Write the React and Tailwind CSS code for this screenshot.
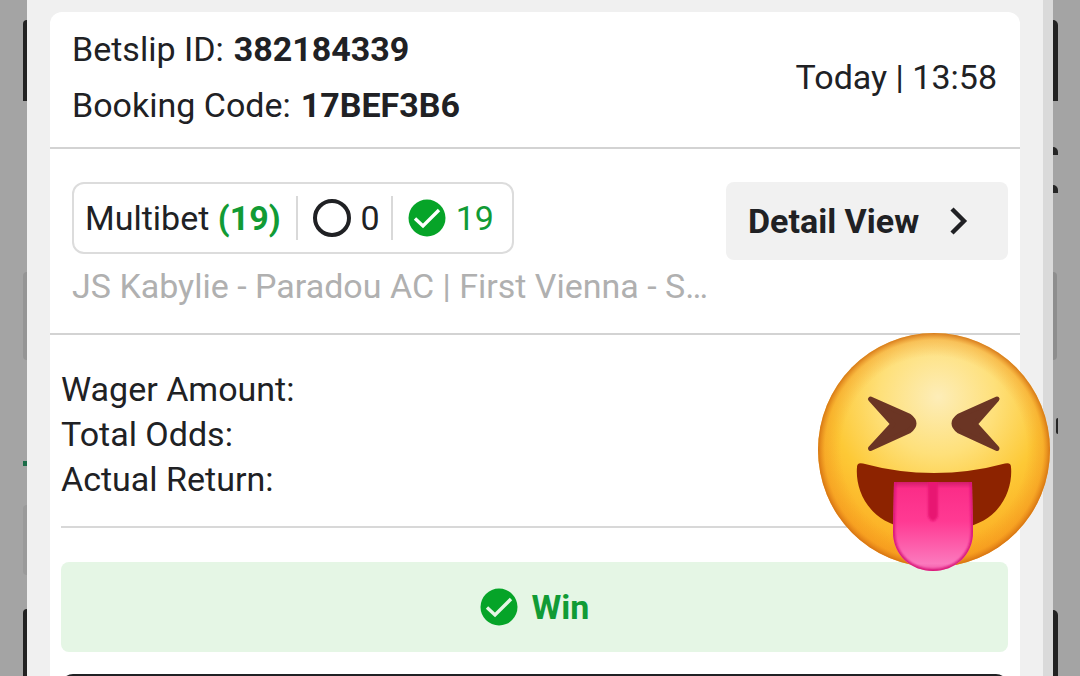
// components/BetslipModal.jsx
const CheckBadge = ({ tickClass }) => (
  <svg viewBox="0 0 38 38" className="size-[38px] shrink-0" aria-hidden="true">
    <circle cx="19" cy="19" r="18.5" className="fill-[#06a428]" />
    <path d="M7 19.500 15 27 31 11" fill="none" strokeWidth="3.4" className={tickClass} />
  </svg>
);

const ChevronRight = () => (
  <svg viewBox="0 0 18 28" className="h-7 w-[18px]" aria-hidden="true">
    <path d="M2 2 14 14 2 26" fill="none" stroke="#202124" strokeWidth="4.4" />
  </svg>
);

const TongueFace = () => (
  <svg viewBox="0 0 232 238" className="h-[238px] w-[232px]" role="img" aria-label="Squinting face with tongue">
    <defs>
      <radialGradient id="skin" gradientUnits="userSpaceOnUse" cx="120" cy="64" r="165">
        <stop offset="0" stopColor="#fdedb8" />
        <stop offset="0.35" stopColor="#fee07a" />
        <stop offset="0.65" stopColor="#fdc936" />
        <stop offset="1" stopColor="#fba61f" />
      </radialGradient>
      <radialGradient id="rim" cx="0.5" cy="0.5" r="0.5">
        <stop offset="0.8" stopColor="#ee8a1c" stopOpacity="0" />
        <stop offset="0.94" stopColor="#ee8a1c" stopOpacity="0.35" />
        <stop offset="1" stopColor="#cf690f" stopOpacity="0.85" />
      </radialGradient>
      <linearGradient id="tongue" x1="0" y1="0" x2="0" y2="1">
        <stop offset="0" stopColor="#c0145c" />
        <stop offset="0.1" stopColor="#fb2d88" />
        <stop offset="0.45" stopColor="#ff3a93" />
        <stop offset="0.9" stopColor="#fb79bd" />
        <stop offset="1" stopColor="#ee4ba0" />
      </linearGradient>
      <clipPath id="tongueClip">
        <path d="M76 149H154L155 199C155 222 137 238 115 238S75 222 75 199Z" />
      </clipPath>
      <filter id="soft" x="-20%" y="-20%" width="140%" height="140%">
        <feGaussianBlur stdDeviation="1.2" />
      </filter>
    </defs>
    <ellipse cx="116" cy="117" rx="116" ry="117" fill="url(#skin)" />
    <ellipse cx="116" cy="117" rx="116" ry="117" fill="url(#rim)" />
    <g fill="#6b3524" stroke="#6b3524" strokeWidth="5" strokeLinejoin="round">
      <path d="M52.500 66 91 83Q101 90.500 91 98L52.500 115.500 75 91Z" />
      <path d="M179 66 141 83Q131 90.500 141 98L179 115.500 157 91Z" />
    </g>
    <path
      d="M39 134Q39 129 45 130.500Q80 140 116 140T187 130.500Q193 129 193 134C195 155 184 188 144 195H88C50 188 37 157 39 134Z"
      fill="#8d2300"
    />
    <g clipPath="url(#tongueClip)">
      <path d="M70 146H160V240H70Z" fill="url(#tongue)" />
      <path d="M110 140H120V183Q118 188 115 188T110 183Z" fill="#e81672" filter="url(#soft)" />
      <path
        d="M76 140H154L155 199C155 222 137 238 115 238S75 222 75 199Z"
        fill="none"
        stroke="#d81378"
        strokeWidth="4"
        filter="url(#soft)"
      />
    </g>
  </svg>
);

// Edges of the page that stay visible behind the modal
const LeftEdge = () => (
  <div className="flex w-[27px] shrink-0 flex-col items-end pt-5">
    <div className="h-[81px] w-1 shrink-0 rounded-tl-full bg-[#222222]" />
    <div className="mt-[171px] h-[88px] w-1 shrink-0 rounded-l-full bg-[#959595]" />
    <div className="mt-[101px] h-[5px] w-1 shrink-0 bg-[#1b6b47]" />
    <div className="mt-[39px] h-[70px] w-1 shrink-0 rounded-l-full bg-[#9a9a9a]" />
    <div className="mt-[34px] w-1 grow rounded-tl-full bg-[#222222]" />
  </div>
);

const RightEdge = () => (
  <div className="flex w-[27px] shrink-0 flex-col items-start pt-5">
    <div className="h-[81px] w-[5px] shrink-0 rounded-tr-full bg-[#222222]" />
    <div className="mt-[46px] h-2 w-[5px] shrink-0 rounded-tr-full bg-[#252525]" />
    <div className="mt-[30px] h-2 w-[5px] shrink-0 rounded-tr-full bg-[#252525]" />
    <div className="mt-[79px] h-[88px] w-1 shrink-0 rounded-r-full bg-[#8e8e8e]" />
    <div className="mt-[58px] ml-[3px] h-4 w-0.5 shrink-0 rounded-l-full bg-[#252525]" />
    <div className="mt-[176px] w-[5px] grow rounded-tr-full bg-[#222222]" />
  </div>
);

const summary = ['Wager Amount:', 'Total Odds:', 'Actual Return:'];

const BetslipHeader = () => (
  <header className="flex items-center justify-between border-b-2 border-[#d3d3d3] pt-[9px] pr-[23px] pb-[14px] pl-[22px]">
    <dl className="leading-[56px]">
      <div className="flex gap-[10px]">
        <dt>Betslip ID:</dt>
        <dd className="font-bold">382184339</dd>
      </div>
      <div className="flex gap-[10px]">
        <dt>Booking Code:</dt>
        <dd className="font-bold">17BEF3B6</dd>
      </div>
    </dl>
    <p>Today | 13:58</p>
  </header>
);

const BetslipMatches = () => (
  <section className="flex items-start justify-between border-b-2 border-[#d3d3d3] pt-[33px] pr-3 pb-[26px] pl-[22px]">
    <div>
      <div className="flex h-[72px] w-fit items-center rounded-xl border-2 border-[#dcdcdc] pr-[18px] pl-[11px]">
        <span>
          Multibet <b className="text-[#119b35]">(19)</b>
        </span>
        <span className="ml-[15px] flex h-11 items-center gap-[10px] border-l-2 border-[#d9d9d9] pl-[15px]">
          <span className="size-[38px] rounded-full border-4 border-[#202124]" />
          0
        </span>
        <span className="ml-[11px] flex h-11 items-center gap-[10px] border-l-2 border-[#d9d9d9] pl-[15px] text-[#119b35]">
          <CheckBadge tickClass="stroke-white" />
          19
        </span>
      </div>
      <p className="pt-3 leading-[41px] text-[#b0b0b0]">JS Kabylie - Paradou AC | First Vienna - S…</p>
    </div>
    <button
      type="button"
      className="flex h-[78px] w-[282px] shrink-0 items-center gap-[31px] rounded-lg bg-[#f1f1f1] pl-[22px] font-bold"
    >
      Detail View
      <ChevronRight />
    </button>
  </section>
);

const BetslipResult = () => (
  <section className="relative pt-8 pr-3 pl-[11px]">
    <ul className="border-b-2 border-[#d8d8d8] pb-6 leading-[45px]">
      {summary.map((label) => (
        <li key={label}>{label}</li>
      ))}
    </ul>
    <div className="mt-[34px] flex h-[90px] items-center justify-center gap-[14px] rounded-lg bg-[#e5f6e5] font-bold text-[#119b35]">
      <CheckBadge tickClass="stroke-[#e5f6e5]" />
      Win
    </div>
    <button type="button" aria-label="Share" className="mt-[22px] h-20 w-full rounded-xl bg-[#202124]" />
    <div className="absolute -top-0.5 -right-[30px]">
      <TongueFace />
    </div>
  </section>
);

const App = () => (
  <div className="flex h-screen overflow-hidden bg-[#a4a4a4] font-[Roboto,sans-serif] text-[34px] leading-[44px] text-[#202124]">
    <LeftEdge />
    <main className="min-w-0 grow border-r-10 border-[#dadada] bg-[#f0f0f0] pt-3 pr-[23px] pl-[23px]">
      <article className="rounded-t-xl bg-white">
        <BetslipHeader />
        <BetslipMatches />
        <BetslipResult />
      </article>
    </main>
    <RightEdge />
  </div>
);

export default App;
